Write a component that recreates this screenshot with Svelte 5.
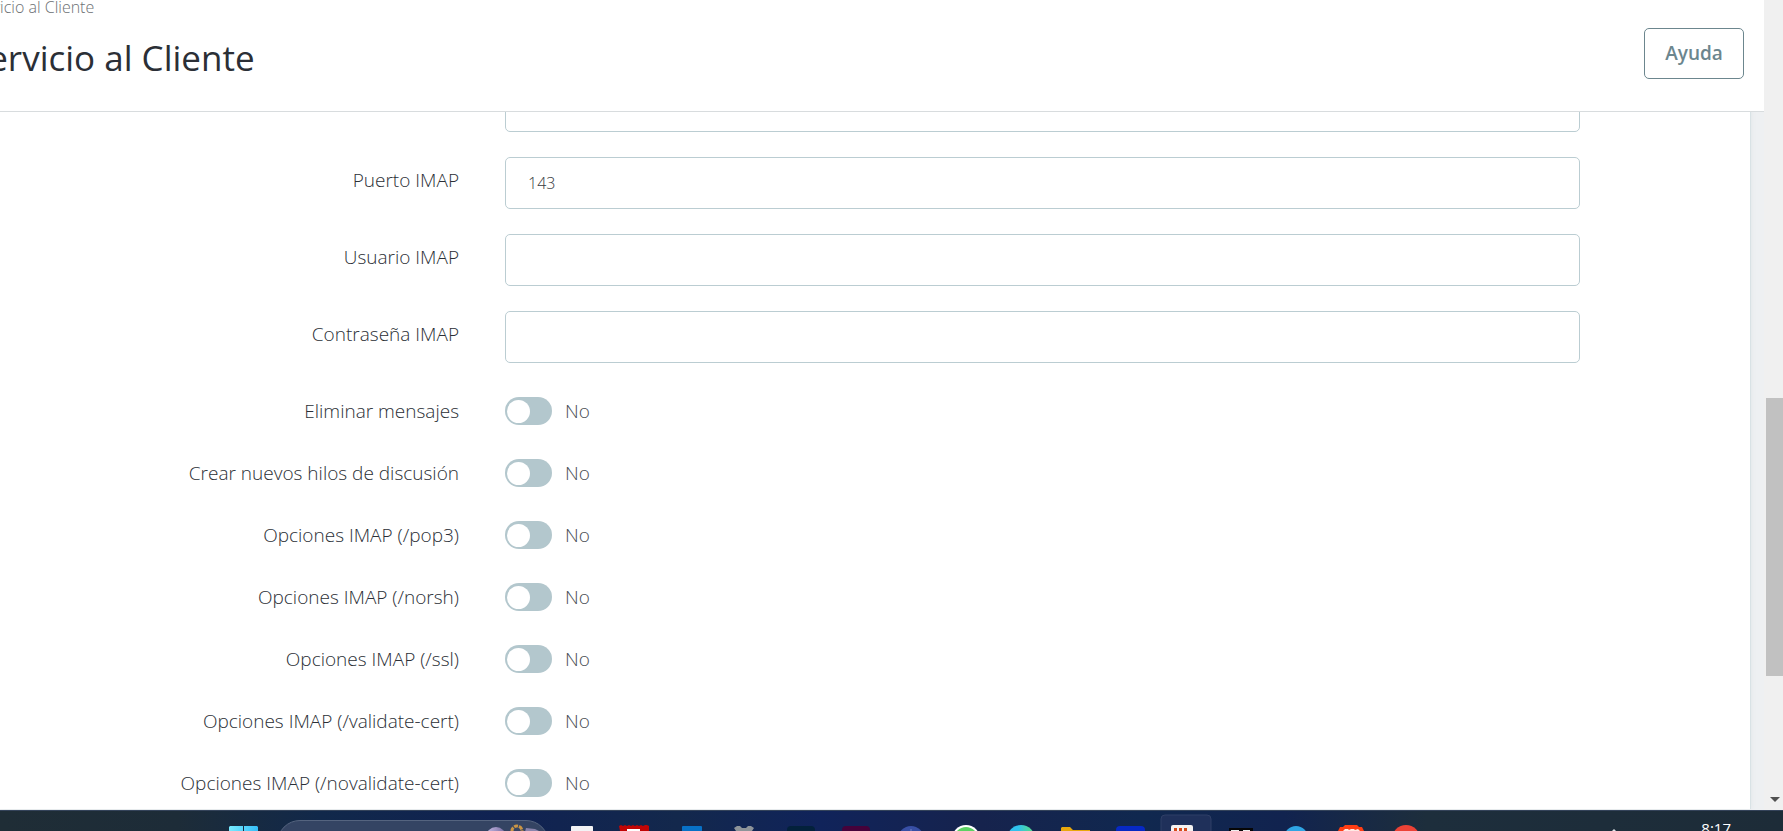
<script lang="ts">
	type Field = {
		id: string;
		label: string;
		type: 'text' | 'password';
		value: string;
	};

	type Option = {
		id: string;
		label: string;
		checked: boolean;
	};

	let fields = $state<Field[]>([
		{ id: 'imap-port', label: 'Puerto IMAP', type: 'text', value: '143' },
		{ id: 'imap-user', label: 'Usuario IMAP', type: 'text', value: '' },
		{ id: 'imap-password', label: 'Contraseña IMAP', type: 'password', value: '' }
	]);

	let options = $state<Option[]>([
		{ id: 'delete-msg', label: 'Eliminar mensajes', checked: false },
		{ id: 'create-threads', label: 'Crear nuevos hilos de discusión', checked: false },
		{ id: 'opt-pop3', label: 'Opciones IMAP (/pop3)', checked: false },
		{ id: 'opt-norsh', label: 'Opciones IMAP (/norsh)', checked: false },
		{ id: 'opt-ssl', label: 'Opciones IMAP (/ssl)', checked: false },
		{ id: 'opt-validate', label: 'Opciones IMAP (/validate-cert)', checked: false },
		{ id: 'opt-novalidate', label: 'Opciones IMAP (/novalidate-cert)', checked: false }
	]);

	let imapUrl = $state('');
</script>

<div class="screen">
	<div class="browser">
		<div class="page">
			<header class="page-header">
				<div class="heading">
					<nav class="breadcrumb"><span>Servicio al Cliente</span></nav>
					<h1>Servicio al Cliente</h1>
				</div>
				<button type="button" class="help">Ayuda</button>
			</header>

			<main class="content">
				<form class="panel" onsubmit={(e) => e.preventDefault()}>
					<div class="row">
						<span></span>
						<input class="text-input" type="text" aria-label="URL IMAP" bind:value={imapUrl} />
					</div>
					{#each fields as field (field.id)}
						<div class="row">
							<label class="field-label" for={field.id}>{field.label}</label>
							<input class="text-input" id={field.id} type={field.type} bind:value={field.value} />
						</div>
					{/each}
					<div class="options">
						{#each options as option (option.id)}
							<div class="row">
								<label for={option.id}>{option.label}</label>
								<div class="toggle">
									<input class="switch" id={option.id} type="checkbox" bind:checked={option.checked} />
									<span>{option.checked ? 'Sí' : 'No'}</span>
								</div>
							</div>
						{/each}
					</div>
				</form>
			</main>
		</div>

		<div class="scrollbar" aria-hidden="true">
			<div class="thumb"></div>
			<svg class="arrow" width="17" height="17" viewBox="0 0 17 17">
				<path d="M4 4H14L9 9Z" fill="#505050" />
			</svg>
		</div>
	</div>

	<footer class="taskbar">
		<svg class="start" width="29" height="21" viewBox="0 0 29 21" aria-hidden="true">
			<defs>
				<linearGradient id="win" x1="0" x2="1">
					<stop offset="0" stop-color="#78ebff" />
					<stop offset="1" stop-color="#35bdf8" />
				</linearGradient>
			</defs>
			<path d="M1 16H14V29H0V17ZM15 16H28L29 17V29H15Z" fill="url(#win)" />
		</svg>

		<div class="search">
			<svg width="60" height="15" viewBox="0 0 60 15" aria-hidden="true">
				<defs>
					<linearGradient id="orb" x1="0" x2="1">
						<stop offset="0" stop-color="#c4b9e4" />
						<stop offset="1" stop-color="#756a9f" />
					</linearGradient>
				</defs>
				<circle cx="10" cy="16" r="10" fill="url(#orb)" />
				<circle cx="31" cy="10" r="5" fill="none" stroke="#c99545" stroke-width="3" stroke-dasharray="4 1" />
				<path d="M38 15L40 7L49 8L55 11V15Z" fill="#8a84ac" />
			</svg>
		</div>

		<div class="apps" aria-hidden="true">
			<svg viewBox="0 0 55 21"><rect x="17" y="16" width="22" height="8" rx="1" fill="#f3f3f5" /></svg>
			<svg viewBox="0 0 55 21">
				<path d="M10 16L12 15L14 16L16 15L18 16L20 15L22 16L24 15L26 16L28 15L30 16L32 15L34 16L36 15L38 15L40 16V21H11Z" fill="#c10505" />
				<path d="M18 21V19H31V21" fill="#fff" />
			</svg>
			<svg viewBox="0 0 55 21"><path d="M18 17Q18 16 19 16H37Q38 16 38 17V21H18Z" fill="#0871c6" /></svg>
			<svg viewBox="0 0 55 21">
				<path d="M15 18L18 16H21L23 18H27L29 16H32L35 18L33 21H17Z" fill="#8e9499" />
			</svg>
			<svg viewBox="0 0 55 21"><rect x="13" y="16" width="28" height="12" rx="4" fill="#03213b" /></svg>
			<svg viewBox="0 0 55 21"><rect x="13" y="16" width="28" height="12" rx="4" fill="#46023a" /></svg>
			<svg viewBox="0 0 55 21">
				<circle cx="27" cy="29" r="13" fill="#384fa5" />
				<path d="M27 19V21" stroke="#7485c8" />
			</svg>
			<svg viewBox="0 0 55 21">
				<circle cx="27" cy="29" r="14" fill="#fff" />
				<circle cx="27" cy="29" r="12" fill="#5bd263" />
			</svg>
			<svg viewBox="0 0 55 21">
				<defs>
					<linearGradient id="wave" x1="0" x2="1">
						<stop offset="0.400" stop-color="#2fc1ed" />
						<stop offset="0.800" stop-color="#4fd89a" />
					</linearGradient>
				</defs>
				<circle cx="27" cy="29" r="14" fill="url(#wave)" />
			</svg>
			<svg viewBox="0 0 55 21"><path d="M12 21V18L13 17H21L24 20H41V21Z" fill="#e8a80c" /></svg>
			<svg viewBox="0 0 55 21"><rect x="12" y="16" width="29" height="12" rx="4" fill="#0729c4" /></svg>
			<svg class="active" viewBox="0 0 55 21">
				<rect x="2" y="5" width="50" height="30" rx="4" fill="#1f305a" stroke="#2f3f66" />
				<rect x="12" y="15" width="22" height="10" rx="2" fill="#f5f2f1" />
				<path d="M15 21V18H18V21M20 21V18H23V21M25 21V18H28V21" fill="#d64a1a" />
			</svg>
			<svg viewBox="0 0 55 21">
				<rect x="15" y="18" width="24" height="6" fill="#060606" />
				<path d="M17 21V20H25V21M29 21V20H36V21" fill="#eee" />
			</svg>
			<svg viewBox="0 0 55 21"><circle cx="27" cy="28" r="12" fill="#2fa5e3" /></svg>
			<svg viewBox="0 0 55 21">
				<path d="M14 21L16 17H19L21 15H33L35 17H38L40 21Z" fill="#ff3d13" />
				<path d="M19 21L21 19H24L25 20L27 19H30L31 20L34 19L36 21Z" fill="#ffe9e4" />
			</svg>
			<svg viewBox="0 0 55 21"><circle cx="27" cy="29" r="14" fill="#ec4236" /></svg>
		</div>

		<div class="tray">
			<svg width="6" height="21" viewBox="0 0 6 21" aria-hidden="true">
				<path d="M3 19L5 21H1Z" fill="#dfe4e8" />
			</svg>
			<time>8:17</time>
		</div>
	</footer>
</div>

<style>
	:global(body) {
		margin: 0;
		background: #fff;
	}

	.screen {
		display: flex;
		flex-direction: column;
		height: 100vh;
		overflow: hidden;
		color: #2b2f36;
		font-family: 'Open Sans', 'Noto Sans', sans-serif;
		font-size: 19px;
		font-weight: 340;
		line-height: 26px;
	}

	.browser {
		display: flex;
		flex: 1;
		min-height: 0;
	}

	.page {
		display: flex;
		flex: 1;
		flex-direction: column;
		min-width: 0;
		overflow: hidden;
		background: #eef0f2;
	}

	.page-header {
		display: flex;
		flex-shrink: 0;
		align-items: flex-start;
		justify-content: space-between;
		box-sizing: border-box;
		height: 112px;
		padding-right: 20px;
		border-bottom: 1px solid #d8dcde;
		background: #fff;
	}

	/* the page is scrolled a little to the right, so the heading is cut off */
	.heading {
		margin-left: -31px;
		white-space: nowrap;
	}

	.breadcrumb {
		height: 33px;
		color: #6c7073;
		font-size: 16px;
		line-height: 14px;
	}

	h1 {
		margin: 0;
		font-size: 35px;
		font-weight: 400;
		line-height: 50px;
	}

	.help {
		width: 100px;
		height: 51px;
		margin-top: 28px;
		padding: 0 0 2px;
		border: 1px solid #6c868e;
		border-radius: 5px;
		background: #fff;
		color: #6c868e;
		font: inherit;
		font-size: 19px;
		font-weight: 600;
		cursor: pointer;
	}

	.content {
		flex: 1;
		min-height: 0;
		padding-right: 13px;
		overflow: hidden;
	}

	.panel {
		display: flex;
		flex-direction: column;
		gap: 25px;
		margin-top: -32px;
		padding: 0 170px 12px 0;
		border-right: 1px solid #d9e2e5;
		background: #fff;
		box-shadow: 0 0 5px #dfe5e8;
	}

	.row {
		display: grid;
		grid-template-columns: 459px 1fr;
		column-gap: 46px;
		align-items: center;
		text-align: right;
	}

	.row label {
		padding-bottom: 1px;
	}

	.row .field-label {
		padding-bottom: 7px;
	}

	.text-input {
		box-sizing: border-box;
		width: 100%;
		height: 52px;
		padding: 0 22px;
		border: 1px solid #bbcdd2;
		border-radius: 5px;
		outline: none;
		background: #fff;
		color: #363a41;
		font: inherit;
		font-size: 16px;
	}

	.text-input:focus-visible,
	.switch:focus-visible {
		outline: 2px solid #7cd1e8;
	}

	.options {
		display: flex;
		flex-direction: column;
		gap: 34px;
		padding-top: 9px;
	}

	.options .row {
		height: 28px;
	}

	.toggle {
		display: flex;
		align-items: center;
		gap: 13px;
		color: #484c52;
	}

	.switch {
		display: flex;
		align-items: center;
		box-sizing: border-box;
		width: 47px;
		height: 28px;
		margin: 0;
		padding: 0 2px;
		border-radius: 14px;
		appearance: none;
		background: #b3c7cd;
		cursor: pointer;
	}

	.switch::before {
		width: 23px;
		height: 23px;
		border-radius: 50%;
		background: #fff;
		content: '';
	}

	.switch:checked {
		justify-content: flex-end;
		background: #25b9d7;
	}

	.scrollbar {
		display: grid;
		grid-template-rows: 398fr 278fr 134fr;
		width: 17px;
		padding-left: 2px;
		background: #f0f0f0;
	}

	.thumb {
		grid-row: 2;
		background: #c1c1c1;
	}

	.arrow {
		grid-row: 3;
		align-self: end;
	}

	.taskbar {
		display: flex;
		flex-shrink: 0;
		height: 21px;
		padding-left: 229px;
		overflow: hidden;
		background: linear-gradient(90deg, #1f2d36 0%, #1d2c38 10%, #11284a 18%, #102252 28%, #13284c 38%, #10235a 46%, #16234d 55%, #10284f 64%, #11234f 72%, #1d2e3c 80%, #1d2c38 100%);
		box-shadow: inset 0 1px #34435a;
	}

	.taskbar svg {
		flex-shrink: 0;
	}

	.search {
		display: flex;
		justify-content: flex-end;
		box-sizing: border-box;
		width: 272px;
		height: 46px;
		margin: 10px 5px 0 19px;
		padding-right: 2px;
		border: 1px solid #55647f;
		border-radius: 23px;
		background: #344463;
	}

	.apps {
		display: flex;
	}

	.apps svg {
		width: 55px;
		height: 21px;
	}

	.tray {
		display: flex;
		gap: 84px;
		margin-left: auto;
		padding-right: 52px;
		color: #fff;
		font-size: 15px;
		font-weight: 400;
	}

	time {
		padding-top: 5px;
	}
</style>
